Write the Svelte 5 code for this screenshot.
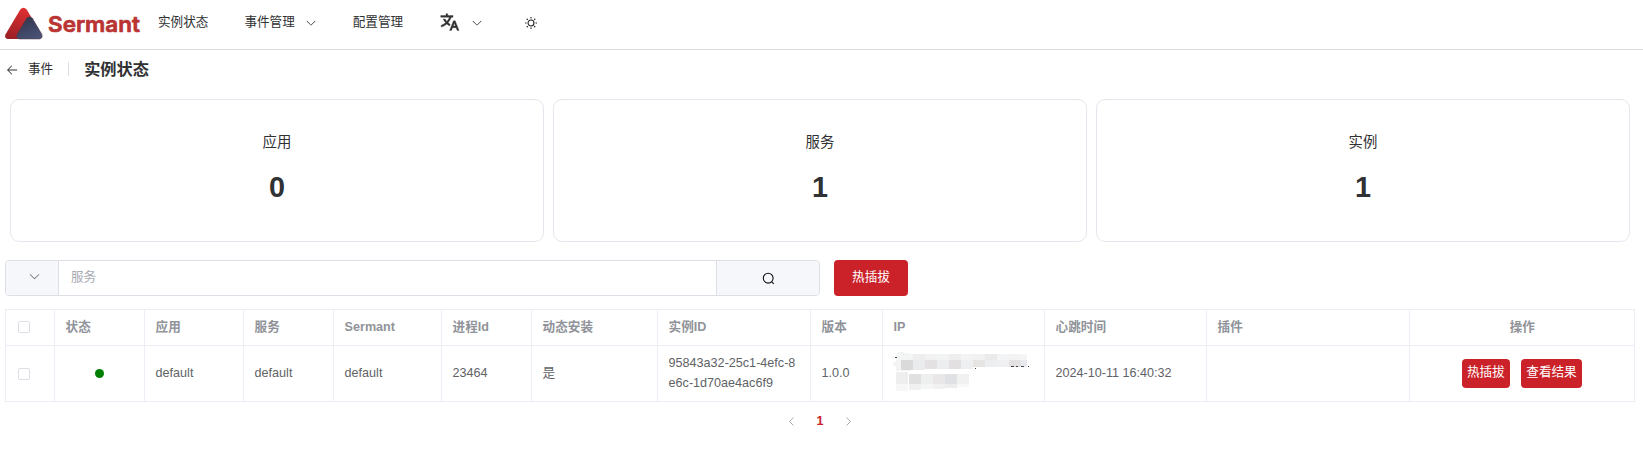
<script>
  const stats = [
    { label: '应用', value: 0 },
    { label: '服务', value: 1 },
    { label: '实例', value: 1 }
  ];
  const heads = ['状态', '应用', '服务', 'Sermant', '进程Id', '动态安装', '实例ID', '版本', 'IP', '心跳时间', '插件'];
  const widths = [49, 90, 99, 90, 108, 90, 126, 153, 72, 162, 162, 203, 225];
  const maskTop = ['#f5f6f6', '#f3f4f4', '#eeeeee', '#f2f2f2', '#f2f3f3', '#eeeeee', '#f3f3f3', '#f1f1f1', '#eaeaea', '#f3f4f6', '#f3f3f3', '#f5f5f5'];
  const maskMid = ['#ececeb', '#dadada', '#e9ebec', '#e3e1e2', '#ebedef', '#e2e0e1', '#edeff0', '#e7e5e4', '#eceef0', '#f0f0f2', '#e3e1e1', '#e9eaef'];
  const maskLow = ['#eeeeee', '#e0e0e0', '#eeefef', '#e9e7e8', '#e0e1e4', '#f1f1f1'];
  const maskEnd = ['#f7f7f7', '#f0f0f0', '#f4f5f5', '#f1f1f1', '#ededef', '#f8f8f8'];
</script>

{#snippet chevron()}
  <svg class="chev" viewBox="0 0 1024 1024"><path fill="currentColor" d="M831.872 340.864 512 652.672 192.128 340.864a30.592 30.592 0 0 0-42.752 0 29.12 29.12 0 0 0 0 41.6L489.664 714.24a32 32 0 0 0 44.672 0l340.288-331.712a29.12 29.12 0 0 0 0-41.728 30.592 30.592 0 0 0-42.752 0z" /></svg>
{/snippet}

<div class="page">
  <header>
    <svg class="logo" width="146" height="40" viewBox="0 0 146 40">
      <defs>
        <linearGradient id="red" x1="0.6" y1="0" x2="0.3" y2="1"><stop offset="0" stop-color="#e03034" /><stop offset="1" stop-color="#9c2024" /></linearGradient>
        <linearGradient id="blue" x1="0.3" y1="0" x2="0.8" y2="1"><stop offset="0" stop-color="#32364d" /><stop offset="1" stop-color="#4a5479" /></linearGradient>
      </defs>
      <path fill="url(#red)" d="M20.3 9.6Q23.5 5.8 26.7 9.6L41.3 34Q43 38.2 38.5 39H8Q3.800 38.500 5.600 34.200Z" />
      <path fill="url(#blue)" stroke="#54384a" stroke-width=".5" d="M26.700 18.300Q29.600 15.300 32.400 18.300L41.700 34Q43.400 38.200 39.400 39H19.600Q15.300 38 17.300 34Z" />
      <text x="48" y="31.700" textLength="92" lengthAdjust="spacingAndGlyphs">Sermant</text>
    </svg>
    <nav>
      <span class="n1">实例状态</span>
      <span class="n2">事件管理 {@render chevron()}</span>
      <span class="n3">配置管理</span>
      <span class="n4">
        <svg width="21" height="21" viewBox="0 0 24 24"><path fill="#303133" stroke="#303133" stroke-width=".4" d="m18.500 10 4.400 11h-2.155l-1.201-3h-4.090l-1.199 3h-2.154L16.500 10h2zM10 2v2h6v2h-1.968a18.222 18.222 0 0 1-3.620 6.301 14.864 14.864 0 0 0 2.336 1.707l-.751 1.878A17.015 17.015 0 0 1 9 13.725a16.676 16.676 0 0 1-6.201 3.548l-.536-1.929a14.700 14.700 0 0 0 5.327-3.042A18.078 18.078 0 0 1 4.767 8h2.240A16.032 16.032 0 0 0 9 10.877a16.165 16.165 0 0 0 2.910-4.876L2 6V4h6V2h2zm7.500 10.885L16.253 16h2.492L17.500 12.885z" /></svg>
        {@render chevron()}
      </span>
      <svg class="sun" width="12" height="12" viewBox="0 0 13 13" fill="none" stroke="#222" stroke-width="1.200"><circle cx="6.500" cy="6.500" r="3.200" /><path d="M6.500 0v1.600M6.500 11.400V13M0 6.500h1.600M11.400 6.500H13M1.900 1.900l1.100 1.100M10 10l1.100 1.100M1.900 11.100 3 10M10 3l1.100-1.100" /></svg>
    </nav>
  </header>

  <div class="crumb">
    <svg width="14" height="14" viewBox="0 0 1024 1024"><path fill="#303133" d="M224 480h640a32 32 0 1 1 0 64H224a32 32 0 0 1 0-64z" /><path fill="#303133" d="m237.248 512 265.408 265.344a32 32 0 0 1-45.312 45.312l-288-288a32 32 0 0 1 0-45.312l288-288a32 32 0 1 1 45.312 45.312L237.248 512z" /></svg>
    <span class="back">事件</span>
    <i></i>
    <h1>实例状态</h1>
  </div>

  <section class="cards">
    {#each stats as s}
      <div class="card"><span>{s.label}</span><strong>{s.value}</strong></div>
    {/each}
  </section>

  <div class="tools">
    <div class="search">
      <div class="pre">{@render chevron()}</div>
      <div class="field">服务</div>
      <div class="post"><svg width="13" height="13" viewBox="0 0 13 13" fill="none" stroke="#111" stroke-width="1.100"><circle cx="6.200" cy="6.200" r="4.900" /><path d="m9.800 9.800 2 2" /></svg></div>
    </div>
    <button class="main">热插拔</button>
  </div>

  <table>
    <colgroup>{#each widths as w}<col style="width:{w}px" />{/each}</colgroup>
    <thead>
      <tr>
        <th class="sel"><b class="box"></b></th>
        {#each heads as h}<th>{h}</th>{/each}
        <th class="mid">操作</th>
      </tr>
    </thead>
    <tbody>
      <tr>
        <td class="sel"><b class="box"></b></td>
        <td class="mid"><b class="dot"></b></td>
        <td>default</td>
        <td>default</td>
        <td>default</td>
        <td>23464</td>
        <td>是</td>
        <td class="id">95843a32-25c1-4efc-8e6c-1d70ae4ac6f9</td>
        <td>1.0.0</td>
        <td>
          <svg class="mask" width="140" height="42" viewBox="0 0 140 42" shape-rendering="crispEdges">
            <path fill="#f3f3f3" d="M1 13 5 8V2l2-2 12 1v18H5v-5z" />
            {#each maskTop as c, i}<rect x={i * 12 - 2 + (i ? 0 : 7)} y="2" width={i === 0 ? 5 : i === 11 ? 6 : 12} height="6" fill={c} />{/each}
            {#each maskMid as c, i}<rect x={i * 12 - 2 + (i ? 0 : 12)} y="8" width={i === 0 ? 0 : i === 11 ? 6 : 12} height={i < 3 ? 10 : i < 7 ? 8.500 : 7} fill={c} />{/each}
            {#each maskLow as c, i}<rect x={i * 12 + 5 + (i ? 1 : 0)} y={i ? 22 : 20} width="12" height={i ? 10 : 12} fill={c} />{/each}
            {#each maskEnd as c, i}<rect x={i * 12 + 5 + (i ? 1 : 0)} y="32" width="12" height={7 - i * 0.800} fill={c} />{/each}
            <path stroke="#444" d="M4 5.500h2M120 14.500h3M125 14.500h2M130 14.500h3M137 14.500h1M84 16.500h1" />
          </svg>
        </td>
        <td>2024-10-11 16:40:32</td>
        <td></td>
        <td class="mid"><div class="acts"><button>热插拔</button><button>查看结果</button></div></td>
      </tr>
    </tbody>
  </table>

  <div class="pager">
    <svg width="11" height="11" viewBox="0 0 11 11"><path d="M7.500 1.500 3.500 5.500l4 4" /></svg>
    <span>1</span>
    <svg width="11" height="11" viewBox="0 0 11 11"><path d="m3.500 1.500 4 4-4 4" /></svg>
  </div>
</div>

<style>
  :global(body) { background: #fff; overflow: hidden; }
  .page { height: 457px; font: 12.6px/20px "Liberation Sans", "Noto Sans CJK SC", sans-serif; color: #303133; }
  header { box-sizing: border-box; height: 50px; border-bottom: 1px solid #dcdcde; display: flex; align-items: flex-start; }
  .logo { flex: none; display: block; }
  .logo text { font: 600 22px Inter, sans-serif; fill: #b93432; stroke: #b93432; stroke-width: .7; stroke-linejoin: round; }
  nav { display: flex; align-items: center; height: 44px; padding-left: 12px; }
  nav span { display: flex; align-items: center; }
  .chev { width: 12px; height: 12px; display: block; flex: none; }
  .n2 { margin-left: 36px; gap: 10.500px; }
  .n3 { margin-left: 35.500px; }
  .n4 { margin-left: 35.500px; gap: 11px; }
  nav .chev { position: relative; top: 1px; }
  .sun { margin-left: 42px; position: relative; top: 1px; }
  .crumb { display: flex; align-items: center; height: 38px; padding-left: 5px; }
  .crumb > svg { position: relative; top: 1px; }
  .back { margin-left: 9px; padding-bottom: 1px; }
  .crumb i { width: 1px; height: 14px; background: #dcdfe6; margin: 0 15px 0 15px; }
  h1 { font-size: 16.2px; font-weight: 700; margin: 0; padding-bottom: 1px; }
  .cards { display: grid; grid-template-columns: repeat(3, 534px); gap: 9px; margin: 11px 0 0 10px; }
  .card { box-sizing: border-box; height: 143px; border: 1px solid #e4e7ed; border-radius: 9px; display: flex; flex-direction: column; align-items: center; padding-top: 31px; }
  .card span { font-size: 14.4px; line-height: 22px; }
  .card strong { font-size: 28.8px; line-height: 34px; margin-top: 17px; }
  .tools { display: flex; gap: 14px; margin: 18px 0 0 5px; height: 36px; }
  .search { box-sizing: border-box; display: flex; width: 815px; border: 1px solid #dcdfe6; border-radius: 4px; overflow: hidden; }
  .pre { width: 53px; padding: 0 0 3px 4px; box-sizing: border-box; border-right: 1px solid #dcdfe6; background: #f5f7fa; display: flex; align-items: center; justify-content: center; color: #606266; }
  .pre .chev { width: 13px; height: 13px; }
  .field { flex: 1; padding-left: 12px; line-height: 33px; color: #a8abb2; }
  .post { width: 103px; box-sizing: border-box; border-left: 1px solid #dcdfe6; background: #f5f7fa; display: flex; align-items: center; justify-content: center; }
  button { font: inherit; border: 0; border-radius: 4px; background: #cb2229; color: #fff; padding: 0; }
  .main { width: 74px; padding-bottom: 2px; }
  table { table-layout: fixed; border-collapse: collapse; width: 1629px; margin: 13px 0 0 5px; }
  th, td { box-sizing: border-box; border: 1px solid #ebeef5; padding: 0 10px 0 10.600px; text-align: left; color: #606266; }
  th { height: 36px; color: #909399; font-weight: 700; padding-bottom: 2px; }
  td { height: 56px; padding-bottom: 1px; }
  .sel { padding: 0 0 0 12px; }
  th.sel { padding-bottom: 1px; }
  .box { display: block; box-sizing: border-box; width: 12px; height: 12px; border: 1px solid #dcdfe6; border-radius: 2px; }
  .mid { text-align: center; }
  .dot { display: block; width: 9px; height: 9px; border-radius: 50%; background: #008000; margin: 1px auto 0; }
  .id { word-break: break-all; }
  .mask { display: block; margin: -1px 0 0 -3px; }
  .acts { display: flex; justify-content: center; gap: 11px; padding: 1px 1px 0 0; }
  .acts button { height: 29px; padding: 0 5.300px 3px; }
  .pager { display: flex; justify-content: center; align-items: center; height: 38px; gap: 19.500px; width: 1640px; }
  .pager svg { fill: none; stroke: #a8abb2; stroke-width: 1; }
  .pager span { color: #cb2229; font-weight: 700; padding-bottom: 1px; }
</style>
